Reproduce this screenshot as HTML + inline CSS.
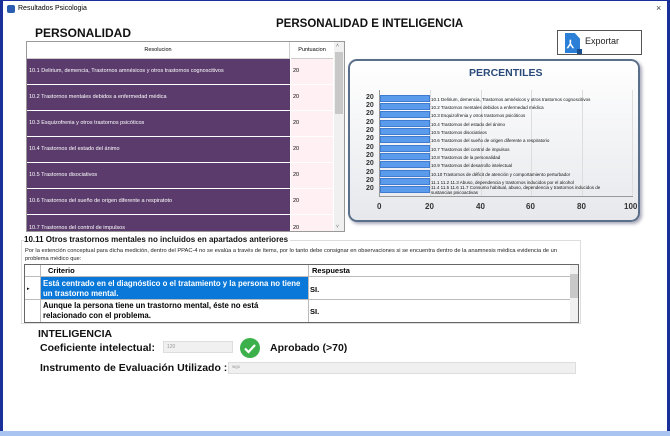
<!DOCTYPE html>
<html><head><meta charset="utf-8"><style>
*{margin:0;padding:0;box-sizing:border-box}
body{width:670px;height:436px;overflow:hidden;background:#fff;font-family:"Liberation Sans",sans-serif;position:relative}
.a{position:absolute}
.row{position:absolute;left:27px;width:263px;height:25px;background:#5a3b6b;color:#fff;font-size:5.5px;line-height:25px;padding-left:2px;white-space:nowrap}
.pt{position:absolute;left:291px;width:42px;height:25px;background:#fff0f4;font-size:5.5px;line-height:25px;padding-left:2px}
.bar{position:absolute;left:380px;width:50px;height:7px;background:#5b9bec;border:1px solid #3f7bd0}
.bl{position:absolute;left:431px;font-size:4.5px;white-space:nowrap;color:#111}
.yl{position:absolute;left:366px;font-size:7px;font-weight:bold;color:#333}
.b{font-family:"Liberation Sans",sans-serif;font-weight:bold}
</style></head><body>
<div class="a" style="left:0;top:0;width:3px;height:436px;background:#1a2f9a"></div>
<div class="a" style="right:0;top:0;width:3px;height:436px;background:#1a2f9a"></div>
<div class="a" style="left:0;top:431px;width:670px;height:5px;background:#a9c4f0"></div>
<div class="a" style="left:0;top:0;width:670px;height:1px;background:#1a2f9a"></div>
<div class="a" style="left:7px;top:5px;width:8px;height:8px;background:#2a5db0;border-radius:2px"></div>
<div class="a" style="left:18px;top:5px;font-size:7px">Resultados Psicologia</div>
<div class="a" style="left:656px;top:3px;font-size:9px;color:#444">×</div>
<div class="a b" style="left:276px;top:18px;font-size:11.5px;color:#111">PERSONALIDAD E INTELIGENCIA</div>
<div class="a b" style="left:35px;top:26px;font-size:12px;color:#111">PERSONALIDAD</div>
<div class="a" style="left:26px;top:41px;width:319px;height:191px;border:1px solid #999;background:#fff"></div>
<div class="a" style="left:27px;top:42px;width:263px;height:17px;font-size:5.5px;text-align:center;line-height:17px;border-right:1px solid #ccc;border-bottom:1px solid #ccc">Resolucion</div>
<div class="a" style="left:291px;top:42px;width:42px;height:17px;font-size:5.5px;text-align:center;line-height:17px;border-bottom:1px solid #ccc">Puntuacion</div>
<div class="row" style="top:59px">10.1 Delirium, demencia, Trastornos amnésicos y otros trastornos cognoscitivos</div><div class="pt" style="top:59px">20</div>
<div class="row" style="top:85px">10.2 Trastornos mentales debidos a enfermedad médica</div><div class="pt" style="top:85px">20</div>
<div class="row" style="top:111px">10.3 Esquizofrenia y otros trastornos psicóticos</div><div class="pt" style="top:111px">20</div>
<div class="row" style="top:137px">10.4 Trastornos del estado del ánimo</div><div class="pt" style="top:137px">20</div>
<div class="row" style="top:163px">10.5 Trastornos disociativos</div><div class="pt" style="top:163px">20</div>
<div class="row" style="top:189px">10.6 Trastornos del sueño de origen diferente a respiratoto</div><div class="pt" style="top:189px">20</div>
<div class="row" style="top:215px;height:16px;line-height:26px;overflow:hidden">10.7 Trastornos del control de impulsos</div><div class="pt" style="top:215px;height:16px;line-height:26px;overflow:hidden">20</div>
<div class="a" style="left:334px;top:42px;width:10px;height:189px;background:#f0f0f0"></div>
<div class="a" style="left:335px;top:52px;width:8px;height:62px;background:#c8c8c8"></div>
<div class="a" style="left:336px;top:43px;font-size:5px;color:#666">˄</div>
<div class="a" style="left:336px;top:224px;font-size:5px;color:#666">˅</div>
<div class="a" style="left:557px;top:30px;width:85px;height:25px;border:1px solid #555;background:#fff"></div>
<div class="a" style="left:565px;top:33px;width:15px;height:20px;background:#2b7fd6;clip-path:polygon(0 0,65% 0,100% 28%,100% 100%,0 100%)"></div>
<div class="a" style="left:567px;top:38px;color:#fff;font-size:11px;font-weight:bold">⅄</div>
<div class="a" style="left:577px;top:49px;width:5px;height:5px;background:#1a4f8f"></div>
<div class="a" style="left:585px;top:36px;font-size:9px;color:#222">Exportar</div>
<div class="a" style="left:348px;top:59px;width:292px;height:163px;border:2px solid #5a6f8a;border-radius:9px;background:linear-gradient(#ffffff,#e6e8ec);box-shadow:2px 2px 3px #aab"></div>
<div class="a b" style="left:469px;top:67px;font-size:10.5px;color:#2a4a7a">PERCENTILES</div>
<div class="a" style="left:379px;top:90px;width:1px;height:106px;background:#999"></div>
<div class="a" style="left:430px;top:90px;width:1px;height:106px;background:#ddd"></div>
<div class="a" style="left:481px;top:90px;width:1px;height:106px;background:#ddd"></div>
<div class="a" style="left:531px;top:90px;width:1px;height:106px;background:#ddd"></div>
<div class="a" style="left:582px;top:90px;width:1px;height:106px;background:#ddd"></div>
<div class="a" style="left:632px;top:90px;width:1px;height:106px;background:#ddd"></div>
<div class="a" style="left:379px;top:196px;width:254px;height:1px;background:#999"></div>
<div class="bar" style="top:95px"></div><div class="bar" style="top:103px"></div><div class="bar" style="top:111px"></div><div class="bar" style="top:120px"></div><div class="bar" style="top:128px"></div><div class="bar" style="top:136px"></div><div class="bar" style="top:145px"></div><div class="bar" style="top:153px"></div><div class="bar" style="top:161px"></div><div class="bar" style="top:170px"></div><div class="bar" style="top:178px"></div><div class="bar" style="top:186px"></div>
<div class="yl" style="top:94px">20</div><div class="yl" style="top:102px">20</div><div class="yl" style="top:110px">20</div><div class="yl" style="top:119px">20</div><div class="yl" style="top:127px">20</div><div class="yl" style="top:135px">20</div><div class="yl" style="top:144px">20</div><div class="yl" style="top:152px">20</div><div class="yl" style="top:160px">20</div><div class="yl" style="top:169px">20</div><div class="yl" style="top:177px">20</div><div class="yl" style="top:185px">20</div>
<div class="bl" style="top:97px">10.1 Delirium, demencia, Trastornos amnésicos y otros trastornos cognoscitivos</div>
<div class="bl" style="top:105px">10.2 Trastornos mentales debidos a enfermedad médica</div>
<div class="bl" style="top:113px">10.3 Esquizofrenia y otros trastornos psicóticos</div>
<div class="bl" style="top:122px">10.4 Trastornos del estado del ánimo</div>
<div class="bl" style="top:130px">10.5 Trastornos disociativos</div>
<div class="bl" style="top:138px">10.6 Trastornos del sueño de origen diferente a respiratorio</div>
<div class="bl" style="top:147px">10.7 Trastornos del control de impulsos</div>
<div class="bl" style="top:155px">10.8 Trastornos de la personalidad</div>
<div class="bl" style="top:163px">10.9 Trastornos del desarrollo intelectual</div>
<div class="bl" style="top:172px">10.10 Trastornos de déficit de atención y comportamiento perturbador</div>
<div class="bl" style="top:180px">11.1 11.2 11.3 Abuso, dependencia y trastornos inducidos por el alcohol</div>
<div class="bl" style="top:185px;line-height:5px">11.4 11.5 11.6 11.7 Consumo habitual, abuso, dependencia y trastornos inducidos de<br>sustancias psicoactivas</div>
<div class="a b" style="left:377px;top:202px;font-size:8px;color:#333">0</div>
<div class="a b" style="left:425px;top:202px;font-size:8px;color:#333">20</div>
<div class="a b" style="left:476px;top:202px;font-size:8px;color:#333">40</div>
<div class="a b" style="left:526px;top:202px;font-size:8px;color:#333">60</div>
<div class="a b" style="left:577px;top:202px;font-size:8px;color:#333">80</div>
<div class="a b" style="left:624px;top:202px;font-size:8px;color:#333">100</div>
<div class="a" style="left:21px;top:240px;width:560px;height:84px;border:1px solid #ddd"></div>
<div class="a b" style="left:24px;top:235px;font-size:8px;background:#fff;padding-right:2px;color:#111">10.11 Otros trastornos mentales no incluidos en apartados anteriores</div>
<div class="a" style="left:25px;top:247px;width:552px;font-size:5.7px;line-height:8px;color:#222">Por la extención conceptual para dicha medición, dentro del PPAC-4 no se evalúa a través de ítems, por lo tanto debe consignar en observaciones si se encuentra dentro de la anamnesis médica evidencia de un problema médico que:</div>
<div class="a" style="left:24px;top:264px;width:555px;height:59px;border:1px solid #666;background:#fff"></div>
<div class="a" style="left:25px;top:265px;width:545px;height:12px;border-bottom:1px solid #bbb"></div>
<div class="a b" style="left:48px;top:266px;font-size:7.5px">Criterio</div>
<div class="a b" style="left:312px;top:266px;font-size:7.5px">Respuesta</div>
<div class="a" style="left:40px;top:265px;width:1px;height:57px;background:#bbb"></div>
<div class="a" style="left:308px;top:265px;width:1px;height:57px;background:#bbb"></div>
<div class="a" style="left:41px;top:277px;width:267px;height:22px;background:#0a78d8"></div>
<div class="a b" style="left:43px;top:279px;width:265px;font-size:7.8px;line-height:9.5px;color:#fff">Está centrado en el diagnóstico o el tratamiento y la persona no tiene un trastorno mental.</div>
<div class="a b" style="left:310px;top:285px;font-size:7.5px">SI.</div>
<div class="a" style="left:27px;top:286px;font-size:5px">▸</div>
<div class="a" style="left:25px;top:299px;width:545px;height:1px;background:#bbb"></div>
<div class="a b" style="left:43px;top:301px;width:260px;font-size:7.8px;line-height:9.5px">Aunque la persona tiene un trastorno mental,  éste no está relacionado con el problema.</div>
<div class="a b" style="left:310px;top:307px;font-size:7.5px">SI.</div>
<div class="a" style="left:570px;top:265px;width:8px;height:57px;background:#f0f0f0"></div>
<div class="a" style="left:570px;top:274px;width:8px;height:24px;background:#c8c8c8"></div>
<div class="a b" style="left:38px;top:328px;font-size:10.5px;color:#111">INTELIGENCIA</div>
<div class="a b" style="left:40px;top:342px;font-size:10.5px;color:#111">Coeficiente intelectual:</div>
<div class="a" style="left:163px;top:341px;width:70px;height:12px;background:#f0f0f0;border:1px solid #ddd;font-size:5px;color:#999;padding:2px 3px">120</div>
<svg class="a" style="left:239px;top:337px" width="22" height="22"><circle cx="11" cy="11" r="10" fill="#3cb04a"/><path d="M6 11.5l3.5 3.5 6.5-7" stroke="#fff" stroke-width="2.2" fill="none"/></svg>
<div class="a b" style="left:270px;top:342px;font-size:10.5px;color:#111">Aprobado (&gt;70)</div>
<div class="a b" style="left:40px;top:362px;font-size:10.5px;color:#111;white-space:nowrap">Instrumento de Evaluación Utilizado :</div>
<div class="a" style="left:228px;top:362px;width:348px;height:12px;background:#f0f0f0;border:1px solid #ddd;font-size:4.5px;color:#999;padding:1px 3px">wgx</div>
</body></html>
